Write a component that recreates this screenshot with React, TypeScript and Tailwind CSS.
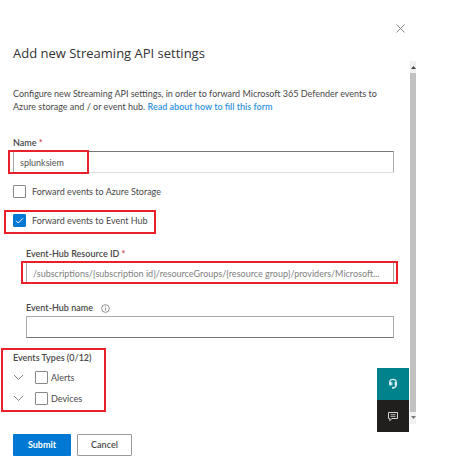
import React, { useState } from "react";

function Highlight({ className }: { className: string }) {
  return <span aria-hidden="true" className={`pointer-events-none absolute border-2 border-[#e8202a] ${className}`} />;
}

type CheckProps = { label: string; defaultChecked?: boolean; gap?: string };

function Check({ label, defaultChecked, gap = "gap-1.5" }: CheckProps) {
  const [checked, setChecked] = useState(!!defaultChecked);
  return (
    <label className={`flex items-center ${gap}`}>
      <span className="relative size-[13px]">
        <input
          type="checkbox"
          checked={checked}
          onChange={(e) => setChecked(e.target.checked)}
          className="block size-[13px] appearance-none rounded-[1px] border border-[#888] bg-white checked:border-[#0078d4] checked:bg-[#0078d4]"
        />
        {checked && (
          <svg viewBox="0 0 13 13" className="pointer-events-none absolute inset-0 size-[13px]" fill="none" stroke="#fff" strokeWidth="1">
            <path d="M3 6.7 5.3 9 10 4.3" />
          </svg>
        )}
      </span>
      <span>{label}</span>
    </label>
  );
}

function Chevron({ label }: { label: string }) {
  return (
    <button type="button" aria-label={label} className="flex w-[22px] items-center">
      <svg viewBox="0 0 11 7" className="h-[7px] w-[11px]" fill="none" stroke="#777" strokeWidth="0.9">
        <path d="M1 1l4.5 4.5L10 1" />
      </svg>
    </button>
  );
}

const field = "block h-[22px] w-full rounded-[1px] border border-[#aaa] bg-white px-1.5 text-[9px] text-[#505050] outline-none placeholder:text-[#808080]";

export default function App() {
  return (
    <main className="bg-white pr-[37px] font-[Lato,'Open_Sans',sans-serif] text-[9px] leading-3 text-[#484848]">
      <header className="flex h-[61px] flex-col pl-[13px]">
        <button type="button" aria-label="Close" className="mt-6 mr-[11px] self-end">
          <svg viewBox="0 0 9 9" className="size-[9px]" fill="none" stroke="#777" strokeWidth="0.9">
            <path d="M.5.5l8 8M8.5.5l-8 8" />
          </svg>
        </button>
        <h1 className="mt-3 font-['Open_Sans',sans-serif] text-[13px] leading-4 font-medium text-[#333]">Add new Streaming API settings</h1>
      </header>

      <div className="relative flex">
        <form id="streaming" className="min-w-0 flex-1 pt-[26px] pr-4 pb-[19px] pl-[13px]" onSubmit={(e) => e.preventDefault()}>
          <p className="leading-[13px]">
            Configure new Streaming API settings, in order to forward Microsoft 365 Defender events to Azure storage and / or event hub.{" "}
            <a href="#help" className="font-semibold text-[#2f93dc]">Read about how to fill this form</a>
          </p>

          <label htmlFor="name" className="mt-6 block font-semibold">
            Name <span className="text-[#d13438]">*</span>
          </label>
          <div className="relative mt-0.5">
            <input id="name" defaultValue="splunksiem" className={`${field} border-t-[#777] border-b-[#ddd]`} />
            <Highlight className="-top-px -left-[5px] h-6 w-[81px]" />
          </div>

          <div className="mt-3">
            <Check label="Forward events to Azure Storage" />
          </div>
          <div className="relative mt-4 w-fit">
            <Check label="Forward events to Event Hub" defaultChecked />
            <Highlight className="-top-1 -left-[9px] h-6 w-[152px]" />
          </div>

          <div className="mt-[21px] pl-[13px]">
            <label htmlFor="resource" className="block font-semibold">
              Event-Hub Resource ID <span className="text-[#d13438]">*</span>
            </label>
            <div className="relative mt-0.5">
              <input
                id="resource"
                placeholder="/subscriptions/{subscription id}/resourceGroups/{resource group}/providers/Microsoft..."
                className={`${field} border-b-[#777] text-ellipsis`}
              />
              <Highlight className="-top-px -right-1 -left-[5px] h-[23px]" />
            </div>
            <div className="mt-[18px] flex items-center gap-2">
              <label htmlFor="hub" className="font-semibold">Event-Hub name</label>
              <svg viewBox="0 0 10 10" className="size-[9px]" fill="none" stroke="#666" strokeWidth="0.8">
                <circle cx="5" cy="5" r="4.3" />
                <path d="M5 4.3v3M5 2.5v1" />
              </svg>
            </div>
            <input id="hub" className={`${field} mt-0.5 border-b-[#777]`} />
          </div>

          <div className="relative mt-[14px] w-fit">
            <fieldset>
              <legend className="font-semibold">Events Types (0/12)</legend>
              <div className="mt-[7px] flex flex-col gap-2">
                <div className="flex">
                  <Chevron label="Expand Alerts" />
                  <Check label="Alerts" gap="gap-[3px]" />
                </div>
                <div className="flex">
                  <Chevron label="Expand Devices" />
                  <Check label="Devices" gap="gap-[3px]" />
                </div>
              </div>
            </fieldset>
            <Highlight className="-top-1 -left-3 h-16 w-[105px]" />
          </div>
        </form>

        <div aria-hidden="true" className="flex w-1.5 flex-col bg-[#f1f1f1]">
          <svg viewBox="0 0 6 12" className="h-3 w-1.5" fill="#444">
            <path d="M1 8 3.5 5 6 8z" />
          </svg>
          <div className="flex-1 bg-[#c1c1c1]" />
          <svg viewBox="0 0 6 12" className="h-3 w-1.5" fill="#777">
            <path d="M1 4 3.5 7 6 4z" />
          </svg>
        </div>

        <div className="absolute right-[7px] -bottom-2 flex flex-col">
          <button type="button" aria-label="Get help" className="flex size-8 items-center justify-center bg-[#00828c]">
            <svg viewBox="0 0 12 12" className="size-3" fill="none" stroke="#d8f0f0">
              <path strokeWidth="1.3" d="M2.7 5.5V4.6a3.3 3.3 0 0 1 6.6 0v2.2c0 1.8-1 2.7-3 3" />
              <path strokeWidth="2.2" d="M3.2 4v3.6M8.8 4v3.6" />
              <path strokeWidth="1.2" d="M4.8 4.2v2.9" />
              <circle cx="6" cy="9.8" r="1.1" fill="#d8f0f0" stroke="none" />
            </svg>
          </button>
          <button type="button" aria-label="Give feedback" className="flex size-8 items-center justify-center bg-[#201f1e]">
            <svg viewBox="0 0 12 11" className="h-[11px] w-3" fill="none" stroke="#d5d5d5" strokeWidth="1">
              <path d="M1.5 1.5h9v6H5L2.8 9.7V7.5H1.5z" />
              <path d="M3.5 3.7h5M3.5 5.4h5" strokeWidth="0.8" />
            </svg>
          </button>
        </div>
      </div>

      <footer className="flex gap-1.5 pt-2.5 pl-[13px]">
        <button type="submit" form="streaming" className="h-[22px] w-[58px] rounded-[1px] bg-[#0078d4] font-bold text-white">
          Submit
        </button>
        <button type="button" className="h-[22px] w-[55px] rounded-[1px] border border-[#999] bg-white font-semibold">
          Cancel
        </button>
      </footer>
    </main>
  );
}
